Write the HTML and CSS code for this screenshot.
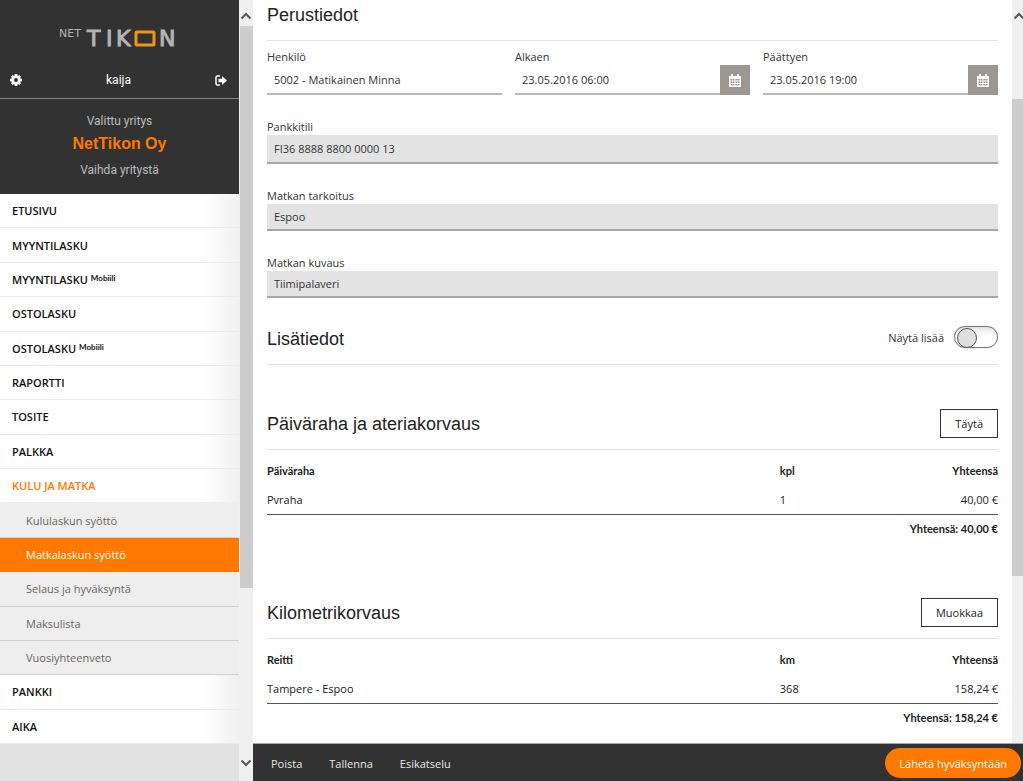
FILE: index.html
```
<!DOCTYPE html>
<html lang="fi">
<head>
<meta charset="utf-8">
<title>NetTikon – Matkalaskun syöttö</title>
<link rel="stylesheet" href="styles.css">
</head>
<body>
<div class="app">
  <aside class="sidebar">
    <header class="brand">
      <svg class="logo" viewBox="0 0 120 28" role="img" aria-label="NetTikon">
        <text class="logo-small" x="-1" y="13">NET</text>
        <text class="logo-big" x="27" y="22">T</text>
        <text class="logo-big" x="46" y="22">I</text>
        <text class="logo-big" x="56" y="22">K</text>
        <rect x="76" y="8" width="18" height="13" rx="1" class="logo-o"/>
        <text class="logo-big" x="99" y="22">N</text>
      </svg>
      <div class="user">
        <button class="icon-btn" aria-label="Asetukset">
          <svg viewBox="0 0 24 24" width="12" height="12"><g fill="#fff"><circle cx="12" cy="12" r="9"/><path d="M9.500 0h5l1 6h-7zM9.500 24h5l1-6h-7zM0 9.500v5l6 1v-7zM24 9.500v5l-6 1v-7zM2 5.500 5.500 2l5 4-4.500 5zM22 5.500 18.500 2l-5 4 4.500 5zM2 18.500 5.500 22l5-4-4.500-5zM22 18.500 18.500 22l-5-4 4.500-5z"/></g><circle cx="12" cy="12" r="4" fill="#323232"/></svg>
        </button>
        <span>kaija</span>
        <button class="icon-btn" aria-label="Kirjaudu ulos">
          <svg viewBox="0 0 24 22" width="12" height="11"><path d="M10 2H5Q2 2 2 5v12q0 3 3 3h5" fill="none" stroke="#fff" stroke-width="3"/><path d="M7 7.500h7V2l10 9-10 9v-5.500H7z" fill="#fff"/></svg>
        </button>
      </div>
    </header>
    <section class="company">
      <p>Valittu yritys</p>
      <strong>NetTikon Oy</strong>
      <a href="#">Vaihda yritystä</a>
    </section>
    <nav class="menu">
      <a href="#">ETUSIVU</a>
      <a href="#">MYYNTILASKU</a>
      <a href="#">MYYNTILASKU <small>Mobiili</small></a>
      <a href="#">OSTOLASKU</a>
      <a href="#">OSTOLASKU <small>Mobiili</small></a>
      <a href="#">RAPORTTI</a>
      <a href="#">TOSITE</a>
      <a href="#">PALKKA</a>
      <a href="#" class="open">KULU JA MATKA</a>
      <a href="#" class="sub">Kululaskun syöttö</a>
      <a href="#" class="sub current">Matkalaskun syöttö</a>
      <a href="#" class="sub">Selaus ja hyväksyntä</a>
      <a href="#" class="sub">Maksulista</a>
      <a href="#" class="sub">Vuosiyhteenveto</a>
      <a href="#">PANKKI</a>
      <a href="#">AIKA</a>
    </nav>
  </aside>
  <div class="scroll scroll-side" aria-hidden="true">
    <svg viewBox="0 0 14 14" width="14" height="14"><path d="M2.500 9.500 7 5l4.500 4.500"/></svg>
    <div class="track"><div class="thumb"></div></div>
    <svg viewBox="0 0 14 14" width="14" height="14"><path d="M2.500 4.500 7 9l4.500-4.500"/></svg>
  </div>
  <div class="page">
    <div class="view">
      <main class="content">
        <div class="section-head"><h2>Perustiedot</h2></div>
        <form class="form">
          <div class="row">
            <div class="field"><label for="person">Henkilö</label><input id="person" type="text" value="5002 - Matikainen Minna"></div>
            <div class="field"><label for="start">Alkaen</label>
              <div class="date"><input id="start" type="text" value="23.05.2016 06:00">
                <button type="button" aria-label="Valitse alkamisaika"><svg viewBox="0 0 24 26" width="12" height="13"><path fill="#fff" d="M0 4h4V0h4v4h8V0h4v4h4v22H0z"/><path fill="#9c9791" d="M3 10h4v3H3zM8 10h3v3H8zM13 10h3v3h-3zM17 10h4v3h-4zM3 15h4v3H3zM8 15h3v3H8zM13 15h3v3h-3zM17 15h4v3h-4zM3 20h4v3H3zM8 20h3v3H8zM13 20h3v3h-3zM17 20h4v3h-4z"/></svg></button></div></div>
            <div class="field"><label for="end">Päättyen</label>
              <div class="date"><input id="end" type="text" value="23.05.2016 19:00">
                <button type="button" aria-label="Valitse päättymisaika"><svg viewBox="0 0 24 26" width="12" height="13"><path fill="#fff" d="M0 4h4V0h4v4h8V0h4v4h4v22H0z"/><path fill="#9c9791" d="M3 10h4v3H3zM8 10h3v3H8zM13 10h3v3h-3zM17 10h4v3h-4zM3 15h4v3H3zM8 15h3v3H8zM13 15h3v3h-3zM17 15h4v3h-4zM3 20h4v3H3zM8 20h3v3H8zM13 20h3v3h-3zM17 20h4v3h-4z"/></svg></button></div></div>
          </div>
          <div class="field"><label for="account">Pankkitili</label><input id="account" class="locked tall" type="text" readonly value="FI36 8888 8800 0000 13"></div>
          <div class="field"><label for="purpose">Matkan tarkoitus</label><input id="purpose" class="locked" type="text" readonly value="Espoo"></div>
          <div class="field"><label for="desc">Matkan kuvaus</label><input id="desc" class="locked" type="text" readonly value="Tiimipalaveri"></div>
        </form>
        <div class="section-head extra"><h2>Lisätiedot</h2>
          <div class="toggle"><label for="more">Näytä lisää</label><input id="more" type="checkbox" role="switch"></div>
        </div>
        <section class="block">
          <div class="section-head"><h2>Päiväraha ja ateriakorvaus</h2><button class="outline">Täytä</button></div>
          <table>
            <thead><tr><th>Päiväraha</th><th class="qty">kpl</th><th class="sum">Yhteensä</th></tr></thead>
            <tbody><tr><td>Pvraha</td><td>1</td><td class="sum">40,00 €</td></tr></tbody>
            <tfoot><tr><td colspan="3" class="sum">Yhteensä: 40,00 €</td></tr></tfoot>
          </table>
        </section>
        <section class="block">
          <div class="section-head"><h2>Kilometrikorvaus</h2><button class="outline">Muokkaa</button></div>
          <table>
            <thead><tr><th>Reitti</th><th class="qty">km</th><th class="sum">Yhteensä</th></tr></thead>
            <tbody><tr><td>Tampere - Espoo</td><td>368</td><td class="sum">158,24 €</td></tr></tbody>
            <tfoot><tr><td colspan="3" class="sum">Yhteensä: 158,24 €</td></tr></tfoot>
          </table>
        </section>
      </main>
      <div class="scroll scroll-main" aria-hidden="true">
        <svg viewBox="0 0 14 14" width="14" height="14"><path d="M2.500 9.500 7 5l4.500 4.500"/></svg>
        <div class="track"><div class="thumb"></div></div>
      </div>
    </div>
    <footer class="actions">
      <button>Poista</button><button>Tallenna</button><button>Esikatselu</button>
      <button class="submit">Lähetä hyväksyntään</button>
    </footer>
  </div>
</div>
</body>
</html>
```
FILE: styles.css
```
* { box-sizing: border-box; }
body { margin: 0; font: 11px/17px "Open Sans", Lato, sans-serif; color: #222; }
button, input { font: inherit; color: inherit; border: 0; border-radius: 0; padding: 0; background: none; }
a { color: inherit; text-decoration: none; }
p, h2 { margin: 0; }

.app { display: flex; height: 100vh; overflow: hidden; background: #fff; }

.sidebar { flex: 0 0 239px; display: flex; flex-direction: column; background: #e2e2e2; padding-bottom: 37px; }
.brand { background: #323232; border-bottom: 1px solid #858585; padding-top: 24px; }
.logo { display: block; width: 120px; height: 28px; margin: 0 auto; overflow: visible; }
.logo text { font-family: "DejaVu Sans", sans-serif; fill: #b4b4b4; stroke: #b4b4b4; }
.logo .logo-small { font-size: 11px; stroke: none; }
.logo-big { font-size: 22px; stroke-width: 1; }
.logo-o { fill: none; stroke: #f39419; stroke-width: 3; }
.user { display: flex; justify-content: space-between; align-items: center; height: 46px; padding: 10px 12px 0 10px; font: 12px/16px Roboto, sans-serif; color: #fff; }
.icon-btn { display: flex; }
.company { background: #323232; color: #bdbdbd; font: 12px/17px Roboto, sans-serif; text-align: center; display: flex; flex-direction: column; padding: 14px 0 15px; }
.company strong { font: bold 16px/27px "Liberation Sans", sans-serif; color: #ff7800; padding-bottom: 5px; }

.menu { flex: 1; display: flex; flex-direction: column; background: #fff; }
.menu a { flex: 1; display: flex; align-items: center; padding-left: 12px; font-weight: 600; color: #111; border-bottom: 1px solid #ebebeb; background: linear-gradient(to left, #f0f0f0, #fff 36px); }
.menu small { font: bold 8px/12px Lato, sans-serif; padding: 0 0 3px 3px; }
.menu .open { color: #ff7800; border-color: #eee; }
.menu .sub { padding-left: 26px; font-weight: normal; color: #6a6661; background: #eee; border-color: #cfcfcf; }
.menu .sub.current { background: #ff7800; border-color: #ff7800; color: #fff; }

.scroll { display: flex; flex-direction: column; background: #f0f0f0; }
.scroll svg { flex: none; fill: none; stroke: #555; stroke-width: 2; }
.scroll .track { flex: 1; }
.thumb { background: #cdcdcd; }
.scroll-side { flex: 0 0 14px; padding: 9px 0 11px; }
.scroll-side .track { padding-top: 3px; }
.scroll-side .thumb { height: 77%; margin-left: 1px; }
.scroll-main { flex: 0 0 11px; padding-top: 9px; overflow: hidden; }
.scroll-main .track { padding-top: 76px; }
.scroll-main .thumb { height: 74%; }

.page { flex: 1; min-width: 0; display: flex; flex-direction: column; }
.view { flex: 1; min-height: 0; display: flex; overflow: hidden; }
.content { flex: 1; padding: 0 14px; overflow: hidden; }
.section-head { display: flex; justify-content: space-between; align-items: center; min-height: 41px; padding-bottom: 11px; border-bottom: 1px solid #e2e2e2; }
h2 { font: 18px/28px "Liberation Sans", sans-serif; }
.form { display: flex; flex-direction: column; gap: 23px; padding-top: 7px; color: #333; }
.row { display: grid; grid-template-columns: repeat(3, 1fr); gap: 13px; }
.field { display: flex; flex-direction: column; }
.field input { width: 100%; height: 30px; padding: 0 7px; border-bottom: 2px solid #bababa; }
.field .locked { height: 27px; background: #e3e3e3; border-color: #a6a6a6; }
.field .tall { height: 29px; }
.date { display: flex; }
.date button { flex: 0 0 30px; display: flex; align-items: center; justify-content: center; background: #9c9791; }
.extra { margin-top: 26px; }
.toggle { display: flex; align-items: center; align-self: flex-start; gap: 10px; padding-top: 2px; color: #333; }
.toggle input { appearance: none; margin: 0; width: 44px; height: 22px; padding: 2px; border: 1px solid #777; border-radius: 11px; background: linear-gradient(#e4e4e4, #fff 8px); box-shadow: 0 0 1px #777; }
.toggle input::before { content: ""; display: block; width: 18px; height: 18px; margin-top: -1px; border: 1px solid #555; border-radius: 50%; background: #dedede; }
.outline { height: 29px; padding: 0 14px; border: 1px solid #333; }
.block { padding-top: 44px; }
.block + .block { padding-top: 55px; }
table { width: 100%; margin-top: 6px; border-collapse: collapse; table-layout: fixed; }
th, td { height: 29px; padding: 0; text-align: left; }
tbody { border-bottom: 1px solid #555; }
.qty { width: 72px; }
th.sum { width: 20%; }
.sum { text-align: right; }
th, tfoot { font-family: Lato, sans-serif; font-weight: bold; }

.actions { flex: 0 0 38px; display: flex; align-items: center; gap: 27px; padding: 1px 2px 0 18px; background: #323232; border-top: 1px solid #aaa; color: #e8e8e8; }
.submit { margin-left: auto; height: 30px; padding: 0 14px; border-radius: 15px; background: #ff7800; color: #fff; }
```
